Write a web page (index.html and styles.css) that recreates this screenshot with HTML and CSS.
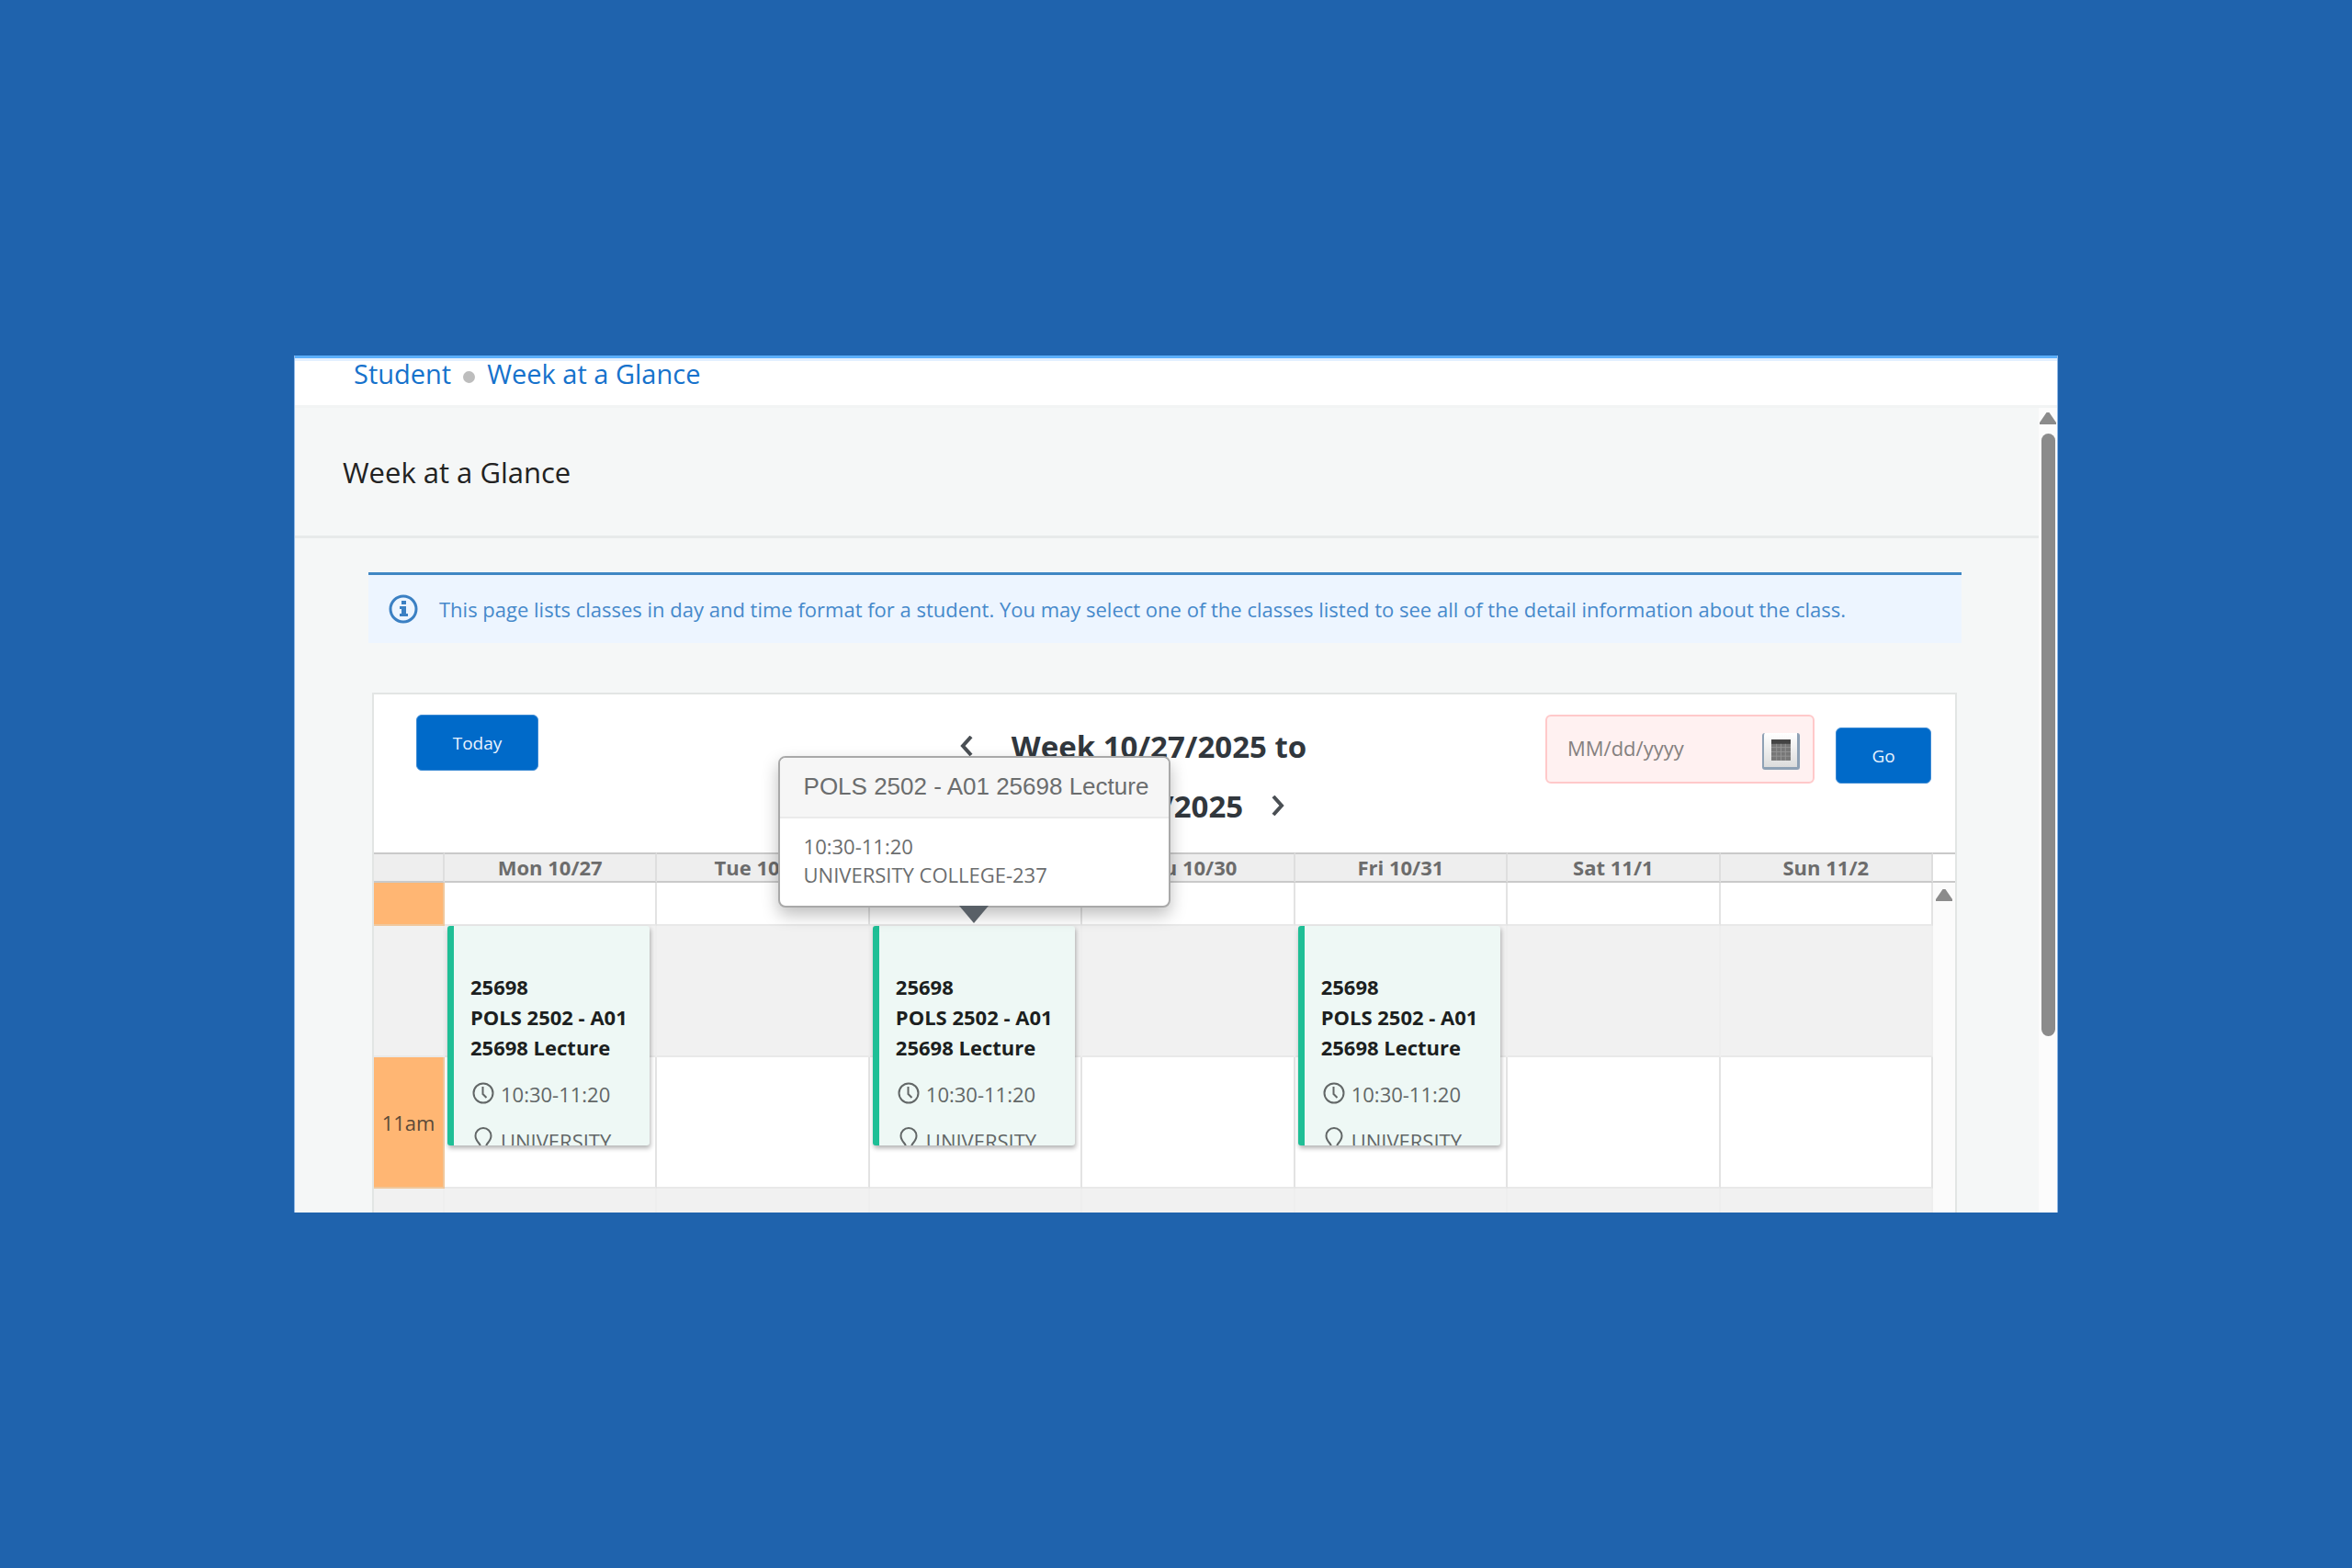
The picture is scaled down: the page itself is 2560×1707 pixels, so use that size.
FILE: index.html
```html
<!DOCTYPE html>
<html lang="en">
<head>
<meta charset="utf-8">
<title>Week at a Glance</title>
<link rel="stylesheet" href="styles.css">
</head>
<body>
<svg class="sprite" aria-hidden="true">
  <symbol id="clock" viewBox="0 0 24 24"><circle cx="12" cy="12" r="10.5" fill="none" stroke="currentColor" stroke-width="2"/><path d="M11.5 5v8l4 4" fill="none" stroke="currentColor" stroke-width="2"/></symbol>
  <symbol id="pin" viewBox="0 0 24 30"><path d="M12 1a8.500 8.500 0 0 0-8.500 8.500c0 4 2 6 4.500 9l4 9 4-9c2.500-3 4.500-5 4.500-9A8.500 8.500 0 0 0 12 1z" fill="none" stroke="currentColor" stroke-width="2"/></symbol>
</svg>
<div class="window">
  <nav class="breadcrumb" aria-label="Breadcrumb">
    <a href="#">Student</a><span class="dot"></span><a href="#">Week at a Glance</a>
  </nav>
  <div class="body">
    <main class="main">
      <header class="page-head"><h1>Week at a Glance</h1></header>
      <p class="info">
        <svg class="info-icon" viewBox="0 0 32 32" aria-hidden="true"><circle cx="16" cy="16" r="14" fill="none" stroke="currentColor" stroke-width="3"/><path d="M14 7h5v4h-5zM12 13h7v8h2v3h-9v-3h2v-5h-2z" fill="currentColor"/></svg>
        <span>This page lists classes in day and time format for a student. You may select one of the classes listed to see all of the detail information about the class.</span>
      </p>
      <section class="calendar">
        <div class="toolbar">
          <button class="btn today" type="button">Today</button>
          <h2><button class="step prev" type="button" aria-label="Previous week"><svg viewBox="0 0 14 22"><path d="M12 1L3 11l9 10"/></svg></button>Week 10/27/2025 to<br>11/2/2025<button class="step next" type="button" aria-label="Next week"><svg viewBox="0 0 14 22"><path d="M2 1l9 10L2 21"/></svg></button></h2>
          <form class="goto">
            <div class="date-field">
              <input type="text" placeholder="MM/dd/yyyy" aria-label="Go to date">
              <button class="picker" type="button" aria-label="Open calendar"><svg viewBox="0 0 22 24"><path class="cal-page" d="M0 0h22v24H0z"/><path class="cal-head" d="M0 0h22v5H0z"/><path class="cal-lines" d="M0 9h22M0 14h22M0 19h22M6 5v19M11 5v19M16 5v19"/></svg></button>
            </div>
            <button class="btn go" type="button">Go</button>
          </form>
        </div>
        <table class="grid">
          <colgroup><col class="time-col"><col><col><col><col><col><col><col><col class="bar-col"></colgroup>
          <thead>
            <tr><th></th><th>Mon 10/27</th><th>Tue 10/28</th><th>Wed 10/29</th><th>Thu 10/30</th><th>Fri 10/31</th><th>Sat 11/1</th><th>Sun 11/2</th><th class="corner"></th></tr>
          </thead>
          <tbody>
            <tr class="first"><td class="hour"></td><td></td><td></td><td></td><td></td><td></td><td></td><td></td><td class="bar" rowspan="4"><span class="arrow-up"></span></td></tr>
            <tr class="alt"><td></td>
              <td><a class="event" href="#"><strong>25698<br>POLS 2502 - A01 25698 Lecture</strong><span class="meta"><svg><use href="#clock"/></svg>10:30-11:20</span><span class="meta place"><svg><use href="#pin"/></svg>UNIVERSITY</span></a></td>
              <td></td>
              <td><a class="event" href="#"><strong>25698<br>POLS 2502 - A01 25698 Lecture</strong><span class="meta"><svg><use href="#clock"/></svg>10:30-11:20</span><span class="meta place"><svg><use href="#pin"/></svg>UNIVERSITY</span></a>
                <div class="tooltip" role="tooltip"><h3>POLS 2502 - A01 25698 Lecture</h3><p>10:30-11:20<br>UNIVERSITY COLLEGE-237</p></div></td>
              <td></td>
              <td><a class="event" href="#"><strong>25698<br>POLS 2502 - A01 25698 Lecture</strong><span class="meta"><svg><use href="#clock"/></svg>10:30-11:20</span><span class="meta place"><svg><use href="#pin"/></svg>UNIVERSITY</span></a></td>
              <td></td><td></td></tr>
            <tr><td class="hour">11am</td><td></td><td></td><td></td><td></td><td></td><td></td><td></td></tr>
            <tr class="alt last"><td></td><td></td><td></td><td></td><td></td><td></td><td></td><td></td></tr>
          </tbody>
        </table>
      </section>
    </main>
    <div class="scrollbar" aria-hidden="true"><span class="arrow-up"></span><span class="thumb"></span></div>
  </div>
</div>
</body>
</html>
```
FILE: styles.css
```css
* { box-sizing: border-box; }
body {
  margin: 0;
  min-height: 100vh;
  display: flex;
  align-items: center;
  justify-content: center;
  background: #1f63ad;
  color: #222;
  font-family: "Open Sans", "Noto Sans", sans-serif;
  font-size: 22px;
}
h1, h2, h3, p { margin: 0; }
a { color: inherit; text-decoration: none; }
button, input { font: inherit; margin: 0; }
.sprite { position: absolute; width: 0; height: 0; }

.window {
  width: 75%;
  background: #fff;
  border: solid #8fb8e6;
  border-width: 0 1px;
  overflow: hidden;
}
.breadcrumb {
  display: flex;
  align-items: center;
  height: 54px;
  padding: 0 64px 17px;
  border-top: 3px solid #5aaefa;
  box-shadow: inset 0 3px #e3f0ff;
  color: #1672cc;
  font-size: 29px;
  line-height: 34px;
}
.dot { width: 13px; height: 13px; margin: 6px 13px 0; border-radius: 50%; background: #bdbdbd; }

.body { display: flex; background: #f5f7f7; border-top: 3px solid #f2f4f4; }
.main { flex: 1; min-width: 0; }
.page-head { padding: 50px 52px 48px; border-bottom: 3px solid #e7eaea; }
h1 { font-size: 31px; line-height: 41px; font-weight: 400; }

.info {
  display: flex;
  align-items: center;
  gap: 23px;
  height: 77px;
  margin: 37px 84px 54px 80px;
  padding: 0 22px;
  border-top: 3px solid #4087c4;
  background: #edf5ff;
  color: #4689cb;
  font-size: 22px;
  white-space: nowrap;
}
.info-icon { width: 32px; height: 32px; flex: none; color: #3b80c3; }

.calendar { margin: 0 89px 0 84px; border: 2px solid #e2e5e4; border-bottom: 0; background: #fff; }
.toolbar {
  display: grid;
  grid-template-columns: 1fr auto 1fr;
  align-items: start;
  height: 172px;
  padding: 22px 26px 0 46px;
}
.btn {
  border: 1px solid #3c8ad4;
  border-radius: 6px;
  background: #006ac9;
  color: #e8f3ff;
  font-size: 19px;
  height: 61px;
  padding: 0;
}
.today { width: 133px; }
.go { width: 104px; }
h2 {
  padding: 2px 88px 0 0;
  color: #31373d;
  font-size: 33px;
  line-height: 65px;
  font-weight: 700;
  text-align: right;
  white-space: nowrap;
}
.step { border: 0; background: none; padding: 0; color: #4a4f54; line-height: 22px; vertical-align: 2px; }
.step svg { display: block; width: 14px; height: 22px; fill: none; stroke: currentColor; stroke-width: 4; }
.prev { margin-right: 42px; }
.next { margin: 0 24px 0 31px; }
.goto { display: flex; justify-content: flex-end; align-items: flex-end; gap: 23px; }
.date-field {
  display: flex;
  align-items: center;
  width: 293px;
  height: 75px;
  padding: 0 14px 0 22px;
  border: 2px solid #ffc9ca;
  border-radius: 6px;
  background: #fff1f1;
}
.date-field input { flex: 1; min-width: 0; padding: 0 0 4px; border: 0; background: none; }
.date-field input::placeholder { color: #85807f; opacity: 1; }
.picker {
  display: grid;
  place-items: center;
  width: 41px;
  height: 40px;
  margin-top: 4px;
  padding: 0;
  border: solid #8ea1b5;
  border-width: 0 3px 3px 2px;
  border-radius: 3px;
  background: linear-gradient(#fff, #dcdcdc);
}
.picker svg { width: 21px; height: 23px; }
.cal-page { fill: #777; }
.cal-head { fill: #444; }
.cal-lines { fill: none; stroke: #959595; stroke-width: 1; }

.grid { width: 100%; table-layout: fixed; border-collapse: separate; border-spacing: 0; }
.time-col { width: 77px; }
.bar-col { width: 24px; }
th {
  height: 33px;
  padding: 0;
  border: solid #c9c9c9;
  border-width: 2px 0;
  border-right: 2px solid #dedede;
  background: #eee;
  color: #6c6c6c;
  font-size: 22px;
  line-height: 29px;
}
.grid .corner { background: #fff; border-right: 0; }
td {
  position: relative;
  height: 143px;
  padding: 0;
  border-right: 2px solid #e3e3e3;
  border-bottom: 2px solid #e9e9e9;
}
.first td { height: 47px; }
.alt td { background: #f1f1f1; border-right-color: #eee; }
.last td { height: 26px; border-bottom: 0; }
.grid .hour { background: #ffb673; color: #5b4a38; border-color: #f0c79c; text-align: center; font-size: 22px; }
.grid .bar { border: 0; background: #fbfbfb; vertical-align: top; padding-top: 7px; }
.arrow-up {
  display: block;
  width: 18px;
  height: 13px;
  margin: 0 auto;
  background: #8b8b8b;
  clip-path: polygon(42% 0, 58% 0, 100% 85%, 100% 100%, 0 100%, 0 85%);
}

.event {
  position: absolute;
  z-index: 1;
  top: 0;
  left: 3px;
  right: 6px;
  height: 239px;
  padding: 50px 16px 0 18px;
  border-left: 7px solid #1fbf96;
  border-radius: 3px;
  background: #eef8f5;
  box-shadow: 1px 3px 5px rgba(0, 0, 0, .3);
  overflow: hidden;
}
.event strong { display: block; line-height: 33px; color: #1c1f20; }
.meta { display: flex; align-items: center; gap: 7px; margin-top: 17px; line-height: 34px; color: #626767; }
.meta svg { width: 24px; height: 24px; margin: 0 0 2px 2px; }
.place svg { height: 30px; margin-bottom: 0; }

.tooltip {
  position: absolute;
  z-index: 3;
  left: 50%;
  bottom: 100%;
  width: 427px;
  margin: 0 0 20px -215px;
  border: 2px solid #a9a9a9;
  border-radius: 8px;
  background: #fff;
  box-shadow: 0 8px 18px rgba(0, 0, 0, .25);
  color: #6b6d6e;
}
.tooltip::after {
  content: "";
  position: absolute;
  top: 100%;
  left: 50%;
  margin-left: -16px;
  border: solid transparent;
  border-top-color: #596067;
  border-width: 19px 16px 0;
}
.tooltip h3 {
  padding: 15px 26px 17px;
  border-bottom: 2px solid #ebebeb;
  border-radius: 6px 6px 0 0;
  background: #f6f6f6;
  font: 400 26px/32px "Liberation Sans", Arial, sans-serif;
  white-space: nowrap;
}
.tooltip p { padding: 15px 26px 18px; line-height: 31px; white-space: nowrap; }

.scrollbar { width: 20px; padding-top: 5px; background: #fcfcfc; }
.thumb { display: block; width: 15px; height: 656px; margin: 10px auto 0; border-radius: 8px; background: #8b8b8b; }
```
